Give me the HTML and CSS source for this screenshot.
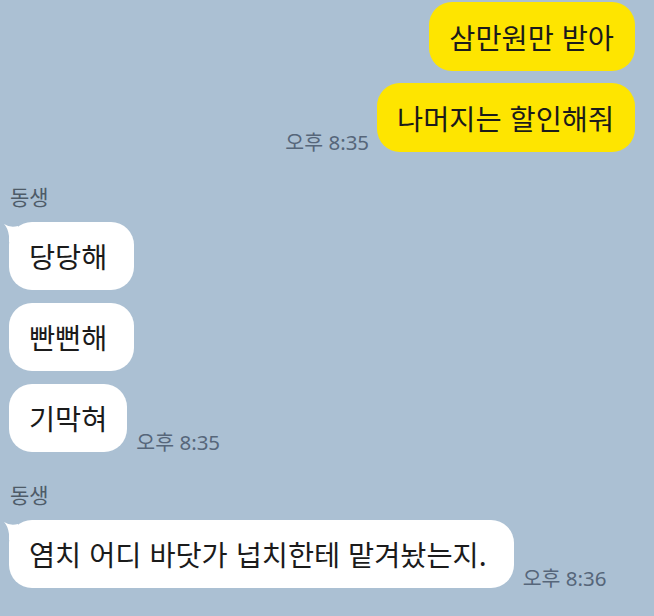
FILE: index.html
```html
<!DOCTYPE html>
<html lang="ko">
<head>
  <meta charset="UTF-8" />
  <meta name="viewport" content="width=device-width, initial-scale=1.0" />
  <title>채팅</title>
  <link rel="stylesheet" href="styles.css">
</head>
<body>
  <div class="chat">
    <div class="group mine">
      <div class="row">
        <div class="bubble">삼만원만 받아</div>
      </div>
      <div class="row">
        <span class="time">오후 8:35</span>
        <div class="bubble">나머지는 할인해줘</div>
      </div>
    </div>

    <div class="group theirs">
      <div class="name">동생</div>
      <div class="row">
        <div class="bubble first">
          <svg class="tail" width="16" height="22" viewBox="0 0 16 22"><path d="M0 2 Q6 6 14 4 L14 20 L5 20 L5 14 Q4 6 0 2 Z" fill="#fff"/></svg>
          당당해
        </div>
      </div>
      <div class="row">
        <div class="bubble">빤뻔해</div>
      </div>
      <div class="row">
        <div class="bubble short">기막혀</div>
        <span class="time">오후 8:35</span>
      </div>
    </div>

    <div class="group theirs">
      <div class="name">동생</div>
      <div class="row">
        <div class="bubble first">
          <svg class="tail" width="16" height="22" viewBox="0 0 16 22"><path d="M0 2 Q6 6 14 4 L14 20 L5 20 L5 14 Q4 6 0 2 Z" fill="#fff"/></svg>
          염치 어디 바닷가 넙치한테 맡겨놨는지.
        </div>
        <span class="time">오후 8:36</span>
      </div>
    </div>
  </div>
</body>
</html>
```

FILE: styles.css
```css
body {
  margin: 0;
  background-color: #abc0d3;
  font-family: "Noto Sans CJK KR", "Noto Sans", sans-serif;
  color: #1b1b1b;
}

.chat {
  width: 654px;
  height: 616px;
  padding-top: 2px;
  box-sizing: border-box;
  overflow: hidden;
}

.group {
  display: flex;
  flex-direction: column;
}

.mine {
  align-items: flex-end;
  padding-right: 19px;
  gap: 12px;
}

.theirs {
  align-items: flex-start;
  padding-left: 9px;
  gap: 13px;
  margin-top: 31px;
}

.theirs + .theirs {
  margin-top: 29px;
}

.row {
  display: flex;
  align-items: flex-end;
  gap: 8px;
}

.bubble {
  position: relative;
  height: 68px;
  line-height: 68px;
  padding: 0 20px;
  border-radius: 23px;
  font-size: 28.4px;
  white-space: nowrap;
}

.mine .bubble {
  height: 69px;
  line-height: 69px;
  padding: 0 21px 0 20px;
  background-color: #fee500;
}

.theirs .bubble {
  padding: 0 27px 0 20px;
  background-color: #ffffff;
}

.theirs .bubble.short {
  padding-right: 20px;
}

.theirs .row {
  gap: 9px;
}

.tail {
  position: absolute;
  left: -5px;
  top: 0;
}

.name {
  font-size: 21px;
  line-height: 26px;
  color: #4e5b68;
  margin-left: 1px;
}

.time {
  font-family: "Noto Sans", "Noto Sans CJK KR", sans-serif;
  font-size: 20.5px;
  line-height: 20px;
  color: #56667a;
  margin-bottom: 0;
}
```
